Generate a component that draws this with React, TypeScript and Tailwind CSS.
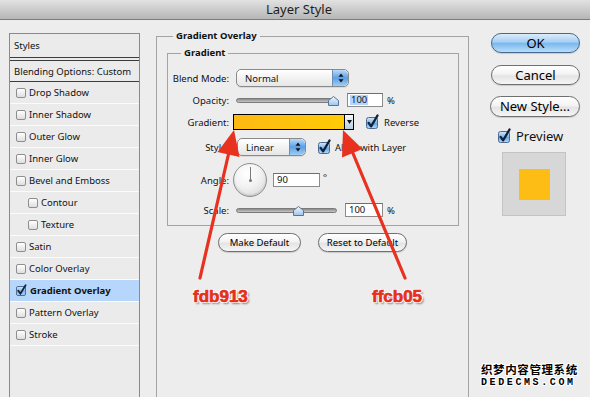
import React from "react";

function SmallBox({ checked = false }: { checked?: boolean }) {
  if (checked) {
    return (
      <svg width="11" height="11" viewBox="0 0 11 11" className="shrink-0 overflow-visible">
        <defs>
          <linearGradient id="sbg" x1="0" y1="0" x2="0" y2="1">
            <stop offset="0" stopColor="#d8ecfd" />
            <stop offset="0.5" stopColor="#7fb6ec" />
            <stop offset="1" stopColor="#a9d3f7" />
          </linearGradient>
        </defs>
        <rect x="0.5" y="1.5" width="9" height="9" rx="1.5" fill="url(#sbg)" stroke="#4f6f92" />
        <path d="M2.3 5.8 L4.4 8.6 L9.6 0.2" fill="none" stroke="#14233a" strokeWidth="1.8" strokeLinecap="round" />
      </svg>
    );
  }
  return (
    <div className="w-[10px] h-[10px] shrink-0 rounded-[2px] border border-[#8e8e8e] bg-gradient-to-b from-[#ffffff] to-[#dedede]" />
  );
}

function BigCheck() {
  return (
    <svg width="13" height="13" viewBox="0 0 13 13" className="shrink-0 overflow-visible">
      <defs>
        <linearGradient id="bcg" x1="0" y1="0" x2="0" y2="1">
          <stop offset="0" stopColor="#d5ebfd" />
          <stop offset="0.5" stopColor="#7cb4ea" />
          <stop offset="0.55" stopColor="#6aa8e6" />
          <stop offset="1" stopColor="#b3dbf9" />
        </linearGradient>
      </defs>
      <rect x="0.5" y="1.5" width="11" height="11" rx="2" fill="url(#bcg)" stroke="#4c6a8e" />
      <path d="M2.6 6.8 L5.1 10.4 L11.6 -0.6" fill="none" stroke="#10203a" strokeWidth="2.2" strokeLinecap="round" strokeLinejoin="round" />
    </svg>
  );
}

function Stepper() {
  return (
    <div className="w-[16px] h-full rounded-r-[5px] border-l border-[#6e8fb3] bg-gradient-to-b from-[#b9dbf8] via-[#5b9fe4] to-[#9fcdf4] flex items-center justify-center">
      <svg width="6" height="10" viewBox="0 0 6 10">
        <path d="M3 0.5 L5.5 3.8 L0.5 3.8 Z" fill="#111" />
        <path d="M3 9.5 L5.5 6.2 L0.5 6.2 Z" fill="#111" />
      </svg>
    </div>
  );
}

function Select({ w, text }: { w: string; text: string }) {
  return (
    <div className={`${w} h-full flex rounded-[5px] border border-[#8a8a8a] bg-gradient-to-b from-[#ffffff] to-[#e6e6e6] overflow-hidden shadow-[0_1px_0_rgba(0,0,0,0.08)]`}>
      <div className="flex-1 flex items-center pl-[8px] text-[9.5px]">{text}</div>
      <Stepper />
    </div>
  );
}

function Knob() {
  return (
    <svg width="11" height="10" viewBox="0 0 11 10" className="absolute top-[-3px]">
      <defs>
        <linearGradient id="kg" x1="0" y1="0" x2="0" y2="1">
          <stop offset="0" stopColor="#f4f9ff" />
          <stop offset="1" stopColor="#9cc3ea" />
        </linearGradient>
      </defs>
      <path d="M5.5 0.5 L10.5 4.5 L10.5 9.5 L0.5 9.5 L0.5 4.5 Z" fill="url(#kg)" stroke="#55769a" />
    </svg>
  );
}

function Slider({ knobLeft }: { knobLeft: string }) {
  return (
    <div className="relative w-[101px] h-[5px] rounded-full bg-gradient-to-b from-[#8a8a8a] to-[#c8c8c8] border border-[#7a7a7a]">
      <div className={`absolute ${knobLeft} top-0`}>
        <Knob />
      </div>
    </div>
  );
}

function Input({ w, children }: { w: string; children: React.ReactNode }) {
  return (
    <div className={`${w} h-[14px] bg-white border border-[#8c8c8c] border-t-[#6e6e6e] flex items-center pl-[2px] text-[9.5px] leading-none`}>
      {children}
    </div>
  );
}

function Label({ children }: { children: React.ReactNode }) {
  return <div className="w-[61px] shrink-0 text-right">{children}</div>;
}

function Row({ children, cls }: { children: React.ReactNode; cls: string }) {
  return <div className={`flex items-center ${cls}`}>{children}</div>;
}

const styleRows: { name: string; indent?: boolean; checked?: boolean }[] = [
  { name: "Drop Shadow" },
  { name: "Inner Shadow" },
  { name: "Outer Glow" },
  { name: "Inner Glow" },
  { name: "Bevel and Emboss" },
  { name: "Contour", indent: true },
  { name: "Texture", indent: true },
  { name: "Satin" },
  { name: "Color Overlay" },
  { name: "Gradient Overlay", checked: true },
  { name: "Pattern Overlay" },
  { name: "Stroke" },
];

function PillButton({ w, children, primary = false, h = "h-[20px]", text = "text-[13px]" }: { w: string; children: React.ReactNode; primary?: boolean; h?: string; text?: string }) {
  const bg = primary
    ? "bg-[linear-gradient(to_bottom,#dcecfb_0%,#a4cff4_45%,#7ab8ee_52%,#b8defa_100%)] border-[#48688d]"
    : "bg-[linear-gradient(to_bottom,#ffffff_0%,#f3f3f3_45%,#e4e4e4_55%,#f6f6f6_100%)] border-[#6f6f6f]";
  return (
    <div className={`${w} ${h} ${text} ${bg} rounded-full border flex items-center justify-center text-black shadow-[0_1px_1px_rgba(0,0,0,0.15)]`}>
      {children}
    </div>
  );
}

const outline =
  "[text-shadow:1px_0_0_#fff,-1px_0_0_#fff,0_1px_0_#fff,0_-1px_0_#fff,1px_1px_0_#fff,-1px_-1px_0_#fff,1px_-1px_0_#fff,-1px_1px_0_#fff,2px_2px_2px_rgba(0,0,0,0.45)]";

export default function App() {
  return (
    <div className="relative w-[590px] h-[397px] overflow-hidden bg-[#ededed] text-[9.5px] leading-[13px] text-[#111] font-['Noto_Sans',sans-serif]">
      {/* Title bar */}
      <div className="h-[20px] flex items-center justify-center bg-gradient-to-b from-[#e2e2e2] to-[#b6b6b6] border-b border-[#7c7c7c] text-[13px] text-[#1e1e1e] pl-[8px]">
        Layer Style
      </div>

      <div className="flex h-[377px]">
        {/* Styles list */}
        <div className="ml-[9px] mt-[13px] w-[131px] h-[400px] shrink-0 border border-[#8a8a8a] bg-[#ebebeb]">
          <div className="h-[24px] flex items-center pl-[4px] border-b border-[#3c3c3c]">Styles</div>
          <div className="h-[2px]" />
          <div className="h-[22px] flex items-center pl-[4px] border-t border-b border-[#3c3c3c]">Blending Options: Custom</div>
          {styleRows.map((r) => (
            <div
              key={r.name}
              className={`h-[22px] flex items-center gap-[3px] border-b border-[#fbfbfb] ${r.indent ? "pl-[18px]" : "pl-[6px]"} ${r.checked ? "bg-[#b7d6fb] font-bold" : ""}`}
            >
              <SmallBox checked={r.checked} />
              <span>{r.name}</span>
            </div>
          ))}
        </div>

        {/* Gradient Overlay group */}
        <div className="ml-[16px] mt-[16px] w-[313px] h-[400px] shrink-0 border border-[#a3a3a3]">
          <div className="-mt-[8px] ml-[16px] w-fit px-[3px] bg-[#ededed] font-bold leading-[14px]">Gradient Overlay</div>

          <div className="mt-[10px] ml-[10px] mr-[9px] border border-[#a3a3a3] pb-[8px]">
            <div className="-mt-[8px] ml-[13px] w-fit px-[3px] bg-[#ededed] font-bold leading-[14px]">Gradient</div>

            <Row cls="mt-[9px] h-[18px]">
              <Label>Blend Mode:</Label>
              <div className="ml-[7px] h-full">
                <Select w="w-[113px]" text="Normal" />
              </div>
            </Row>

            <Row cls="mt-[6px] h-[14px]">
              <Label>Opacity:</Label>
              <div className="ml-[7px]">
                <Slider knobLeft="left-[91px]" />
              </div>
              <div className="ml-[10px]">
                <Input w="w-[36px]">
                  <span className="bg-[#b5d5ff] px-[1px]">100</span>
                </Input>
              </div>
              <span className="ml-[4px]">%</span>
            </Row>

            <Row cls="mt-[7px] h-[16px]">
              <Label>Gradient:</Label>
              <div className="ml-[4px] flex h-full border border-black">
                <div className="w-[110px] h-full bg-gradient-to-r from-[#fdb913] to-[#ffcb05]" />
                <div className="w-[9px] h-full border-l border-black bg-gradient-to-b from-[#f4f8fc] to-[#b6cce2] flex items-center justify-center">
                  <svg width="5" height="4" viewBox="0 0 5 4">
                    <path d="M0 0 L5 0 L2.5 4 Z" fill="#111" />
                  </svg>
                </div>
              </div>
              <div className="ml-[12px] flex items-center">
                <BigCheck />
              </div>
              <span className="ml-[5px]">Reverse</span>
            </Row>

            <Row cls="mt-[8px] h-[18px]">
              <Label>Style:</Label>
              <div className="ml-[8px] h-full">
                <Select w="w-[69px]" text="Linear" />
              </div>
              <div className="ml-[12px] flex items-center">
                <BigCheck />
              </div>
              <span className="ml-[4px]">Align with Layer</span>
            </Row>

            <Row cls="mt-[7px] h-[34px]">
              <Label>Angle:</Label>
              <div className="ml-[4px] w-[34px] h-[34px] rounded-full border border-[#8f8f8f] bg-[radial-gradient(circle_at_40%_30%,#ffffff_0%,#f2f2f2_45%,#d2d2d2_100%)] relative shadow-[inset_0_-1px_2px_rgba(0,0,0,0.15)]">
                <div className="absolute left-[16px] top-[3px] w-[1px] h-[13px] bg-[#7a7a7a]" />
                <div className="absolute left-[15px] top-[15px] w-[3px] h-[3px] rounded-full bg-[#777]" />
              </div>
              <div className="ml-[6px]">
                <Input w="w-[47px]">
                  <span className="pl-[1px]">90</span>
                </Input>
              </div>
              <span className="ml-[3px] self-start mt-[8px]">°</span>
            </Row>

            <Row cls="mt-[6px] h-[14px]">
              <Label>Scale:</Label>
              <div className="ml-[7px]">
                <Slider knobLeft="left-[56px]" />
              </div>
              <div className="ml-[8px]">
                <Input w="w-[38px]">
                  <span className="pl-[1px]">100</span>
                </Input>
              </div>
              <span className="ml-[4px]">%</span>
            </Row>
          </div>

          <div className="mt-[7px] flex justify-center gap-[17px]">
            <PillButton w="w-[83px]" h="h-[19px]" text="text-[9.5px]">Make Default</PillButton>
            <PillButton w="w-[89px]" h="h-[19px]" text="text-[9.5px]">Reset to Default</PillButton>
          </div>
        </div>

        {/* Right column */}
        <div className="ml-[21px] mt-[13px] w-[90px] shrink-0 flex flex-col">
          <div className="ml-[1px]">
            <PillButton w="w-[89px]" primary>OK</PillButton>
          </div>
          <div className="ml-[1px] mt-[12px]">
            <PillButton w="w-[89px]">Cancel</PillButton>
          </div>
          <div className="mt-[11px]">
            <PillButton w="w-[90px]" h="h-[21px]">New Style...</PillButton>
          </div>
          <div className="mt-[12px] ml-[8px] h-[15px] flex items-center text-[13px]">
            <BigCheck />
            <span className="ml-[5px]">Preview</span>
          </div>
          <div className="mt-[8px] ml-[12px] w-[64px] h-[64px] bg-[#d7d7d7] border border-[#c4c4c4] flex items-center justify-center">
            <div className="w-[31px] h-[31px] bg-[#fdbd14]" />
          </div>
        </div>
      </div>

      {/* Annotation arrows */}
      <svg className="absolute left-0 top-0 pointer-events-none" width="590" height="397" viewBox="0 0 590 397">
        <line x1="200" y1="278" x2="229" y2="152" stroke="#e8321f" strokeWidth="3.2" strokeLinecap="round" />
        <polygon points="234,130 239.5,157 217.5,152" fill="#e8321f" />
        <line x1="405" y1="278" x2="352" y2="151" stroke="#e8321f" strokeWidth="3.2" strokeLinecap="round" />
        <polygon points="343,130 362.5,149 342,157.5" fill="#e8321f" />
      </svg>

      <div className={`absolute left-[193px] top-[287px] text-[17px] leading-[20px] font-bold text-[#e3301b] font-['Liberation_Sans',sans-serif] [-webkit-text-stroke:0.7px_#e3301b] ${outline}`}>
        fdb913
      </div>
      <div className={`absolute left-[372px] top-[287px] text-[17px] leading-[20px] font-bold text-[#e3301b] font-['Liberation_Sans',sans-serif] [-webkit-text-stroke:0.7px_#e3301b] ${outline}`}>
        ffcb05
      </div>

      {/* Watermark */}
      <div className="absolute left-[481px] top-[363px] flex flex-col items-start text-black font-bold [text-shadow:1px_0_0_#fff,-1px_0_0_#fff,0_1px_0_#fff,0_-1px_0_#fff,1px_1px_0_#fff,-1px_-1px_0_#fff,1px_-1px_0_#fff,-1px_1px_0_#fff]">
        <div className="h-[12px] text-[11.5px] leading-[12px] tracking-[0.6px] font-['Noto_Sans_CJK_SC',sans-serif]">织梦内容管理系统</div>
        <div className="mt-[3px] h-[10px] text-[10px] leading-[10px] tracking-[2.6px] font-['Liberation_Mono',monospace]">DEDECMS.COM</div>
      </div>
    </div>
  );
}
